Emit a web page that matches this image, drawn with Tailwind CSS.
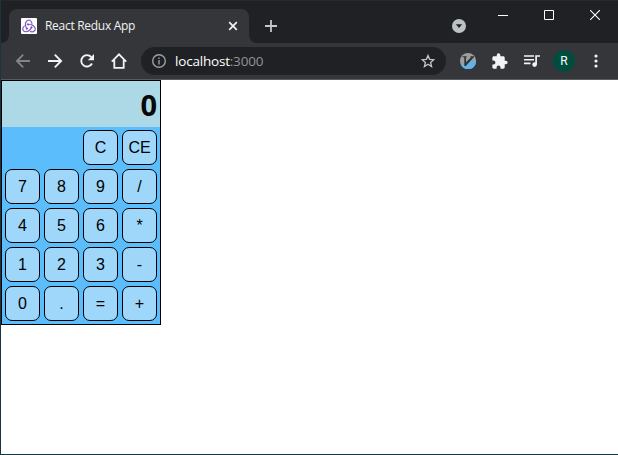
<!DOCTYPE html>
<html lang="en">
<head>
<meta charset="utf-8">
<title>React Redux App</title>
<script src="https://cdn.jsdelivr.net/npm/@tailwindcss/browser@4"></script>
</head>
<body class="w-[618px] h-[455px] overflow-hidden bg-white">
<div class="w-[618px] h-[455px] flex flex-col border-l border-b border-[#173640] font-['Open_Sans',sans-serif]">
  <header class="h-[43px] shrink-0 bg-[#202124] border-t border-[#252b24] flex">
    <div class="w-2 flex items-end bg-[#35363a]"><div class="w-full h-full bg-[#202124] rounded-br-lg"></div></div>
    <div class="mt-2 w-[240px] h-[34px] bg-[#35363a] rounded-t-lg flex items-center pl-3 pr-[11px]">
      <svg class="size-4 shrink-0" viewBox="0 0 16 16" fill="none">
        <rect width="16" height="16" rx="1" fill="#fff"/>
        <path transform="translate(1.4 1.3) scale(.55)" fill="#764abc" stroke="#764abc" stroke-width=".5" d="M16.634 16.504c.87-.075 1.543-.84 1.5-1.754-.047-.914-.796-1.648-1.709-1.648h-.061a1.71 1.71 0 00-1.648 1.769c.03.479.226.869.494 1.153-1.048 2.038-2.621 3.535-5.005 4.795-1.603.838-3.296 1.154-4.944.929-1.378-.194-2.456-.81-3.116-1.799-.988-1.499-1.078-3.116-.255-4.734.601-1.166 1.499-2.023 2.099-2.443a9.96 9.96 0 01-.42-1.543C-.868 14.408-.416 18.752.932 20.805c1.004 1.498 3.057 2.456 5.304 2.456.599 0 1.23-.044 1.843-.194 3.897-.749 6.848-3.086 8.541-6.532zm5.348-3.746c-2.32-2.728-5.738-4.226-9.634-4.226h-.51c-.253-.554-.837-.899-1.498-.899h-.045c-.943 0-1.678.81-1.647 1.753.03.898.794 1.648 1.708 1.648h.074a1.69 1.69 0 001.499-1.049h.555c2.309 0 4.495.674 6.488 1.992 1.527 1.004 2.622 2.322 3.236 3.896.538 1.288.509 2.547-.045 3.597-.855 1.647-2.294 2.517-4.196 2.517-1.199 0-2.367-.375-2.967-.644-.36.298-.96.793-1.394 1.093 1.318.598 2.652.943 3.94.943 2.922 0 5.093-1.647 5.918-3.236.898-1.798.824-4.824-1.47-7.416zM6.49 17.042c.03.899.793 1.648 1.708 1.648h.06a1.688 1.688 0 001.648-1.768c0-.9-.779-1.647-1.693-1.647h-.06c-.06 0-.149 0-.226.029-1.243-2.098-1.768-4.347-1.572-6.772.12-1.828.72-3.417 1.797-4.735.899-1.124 2.593-1.68 3.746-1.708 3.236-.061 4.585 3.971 4.689 5.574l1.498.45c-.345-4.914-3.4-7.492-6.322-7.492-2.742 0-5.273 1.993-6.293 4.915-1.398 3.896-.479 7.641 1.229 10.638-.149.195-.239.54-.209.868z"/>
      </svg>
      <span class="ml-2 text-[12px] leading-4 text-[#f1f3f4] whitespace-nowrap tracking-[-0.29px]">React Redux App</span>
      <svg class="ml-auto size-[10px]" viewBox="0 0 10 10" stroke="#f1f3f4" stroke-width="1.7"><path d="M1.2 1.2l7.6 7.6M8.8 1.2L1.2 8.8"/></svg>
    </div>
    <div class="grow flex bg-[#35363a]">
      <div class="grow bg-[#202124] rounded-bl-lg flex">
        <svg class="ml-4 mt-[19px] size-3 shrink-0" viewBox="0 0 12 12" stroke="#c4c7ca" stroke-width="1.8"><path d="M6 0v12M0 6h12"/></svg>
        <svg class="ml-[175px] mt-[18px] size-[14px] shrink-0" viewBox="0 0 14 14"><circle cx="7" cy="7" r="7" fill="#bdc1c6"/><path d="M3.8 5.2h6.4L7 9z" fill="#202124"/></svg>
        <svg class="ml-[32px] mt-[14px] w-[10px] h-px shrink-0" viewBox="0 0 10 1"><path d="M0 0h10v1H0z" fill="#fff"/></svg>
        <svg class="ml-[36px] mt-[9px] size-[10px] shrink-0" viewBox="0 0 10 10" fill="none" stroke="#fff"><path d="M.5.5h9v9h-9z"/></svg>
        <svg class="ml-[36px] mt-[9px] size-[10px] shrink-0" viewBox="0 0 10 10" stroke="#fff" stroke-width="1.1"><path d="M0 0l10 10M10 0L0 10"/></svg>
      </div>
    </div>
  </header>
  <nav class="h-[37px] shrink-0 bg-[#35363a] border-b border-[#5a5b5e] flex items-center pl-[14px]">
    <svg class="size-4 shrink-0" viewBox="0 0 16 16" fill="none" stroke="#828487" stroke-width="1.8"><path d="M15 8H2.5M8.2 1.7L1.9 8l6.3 6.3"/></svg>
    <svg class="ml-4 size-4 shrink-0" viewBox="0 0 16 16" fill="none" stroke="#f1f3f4" stroke-width="1.9"><path d="M1 8h12.5M7.8 1.7L14.1 8l-6.3 6.3"/></svg>
    <svg class="ml-4 size-4 shrink-0" viewBox="0 0 16 16"><path d="M13 10.5A5.7 5.7 0 1 1 12.2 4" fill="none" stroke="#f1f3f4" stroke-width="1.9"/><path d="M15 1v6.2H8.8z" fill="#f1f3f4"/></svg>
    <svg class="ml-4 size-4 shrink-0" viewBox="0 0 16 16" fill="none" stroke="#f1f3f4" stroke-width="1.8"><path d="M.8 8.6L8 1.3l7.2 7.3M3.3 7v7.8h9.4V7"/></svg>
    <div class="ml-[14px] w-[305px] h-7 rounded-full bg-[#202124] flex items-center pl-[11px] pr-[11px]">
      <svg class="size-[14px] shrink-0" viewBox="0 0 14 14" fill="none" stroke="#9aa0a6" stroke-width="1.4"><circle cx="7" cy="7" r="6.3"/><path d="M7 6.1v4.3M7 3.4v1.5"/></svg>
      <span class="ml-[9px] text-[13.5px] leading-5 text-white whitespace-nowrap tracking-[-0.2px]">localhost<span class="text-[#8f959b]">:3000</span></span>
      <svg class="ml-auto size-[14px] shrink-0" viewBox="0 0 14 14" fill="none" stroke="#c4c7ca" stroke-width="1.3"><path d="M7 1.5l1.6 3.8 4.2.4-3.2 2.7 1 4.1L7 10.3l-3.6 2.2 1-4.1-3.2-2.7 4.2-.4z"/></svg>
    </div>
    <svg class="ml-[14px] size-4 shrink-0" viewBox="0 0 16 16">
      <circle cx="8" cy="8" r="8" fill="#9c9e9f"/><path d="M16 7A8 8 0 0 1 1 12z" fill="#62b1e7"/>
      <path d="M2.5 3.2h4.2v.9L6 4.5v4.8l5-5.1-.6-.3v-.7H14v.9L5.8 13H4.3V4.5l-1.8-.4z" fill="#303338"/>
    </svg>
    <svg class="ml-[16px] size-4 shrink-0" viewBox="1.5 .5 22 22" fill="#f1f3f4"><path d="M20.5 11H19V7c0-1.1-.9-2-2-2h-4V3.5a2.5 2.5 0 0 0-5 0V5H4c-1.1 0-1.99.9-1.99 2v3.8H3.5c1.49 0 2.7 1.21 2.7 2.7s-1.21 2.7-2.7 2.7H2V20c0 1.1.9 2 2 2h3.8v-1.5c0-1.49 1.21-2.7 2.7-2.7s2.7 1.21 2.7 2.7V22H17c1.1 0 2-.9 2-2v-4h1.5a2.5 2.5 0 0 0 0-5z"/></svg>
    <svg class="ml-[16px] size-4 shrink-0" viewBox="0 0 16 16"><path d="M0 3h10M0 6.7h10M0 10.4h6.5" stroke="#f1f3f4" stroke-width="1.6"/><circle cx="10.6" cy="11.6" r="2.3" fill="#f1f3f4"/><path d="M12.1 11.5V3H16" fill="none" stroke="#f1f3f4" stroke-width="1.7"/></svg>
    <div class="ml-[13px] size-[22px] shrink-0 rounded-full bg-[#004d40] text-white font-[Roboto,sans-serif] text-[12px] leading-[22px] text-center">R</div>
    <svg class="ml-[19px] w-[4px] h-[14px] shrink-0" viewBox="0 0 4 14" fill="#f1f3f4"><circle cx="2" cy="2" r="1.6"/><circle cx="2" cy="7" r="1.6"/><circle cx="2" cy="12" r="1.6"/></svg>
  </nav>
  <main class="grow bg-white">
    <div class="w-[160px] h-[245px] border border-black bg-[#5cbdfd]">
      <div class="h-[46px] bg-[#add8e6] pr-[3px] pt-[3px] text-right text-[29px] leading-[41px] font-bold text-[#080808]">0</div>
      <div class="grid grid-cols-[repeat(4,35px)] auto-rows-[35px] gap-1 px-[3px] pt-[3px] font-['Liberation_Sans',sans-serif] text-[16px] leading-[18px] text-black *:rounded-[7px] *:border *:border-black *:bg-[#9fd7fa]">
        <button class="col-start-3">C</button><button>CE</button>
        <button>7</button><button>8</button><button>9</button><button>/</button>
        <button>4</button><button>5</button><button>6</button><button>*</button>
        <button>1</button><button>2</button><button>3</button><button>-</button>
        <button>0</button><button>.</button><button>=</button><button>+</button>
      </div>
    </div>
  </main>
</div>
</body>
</html>
